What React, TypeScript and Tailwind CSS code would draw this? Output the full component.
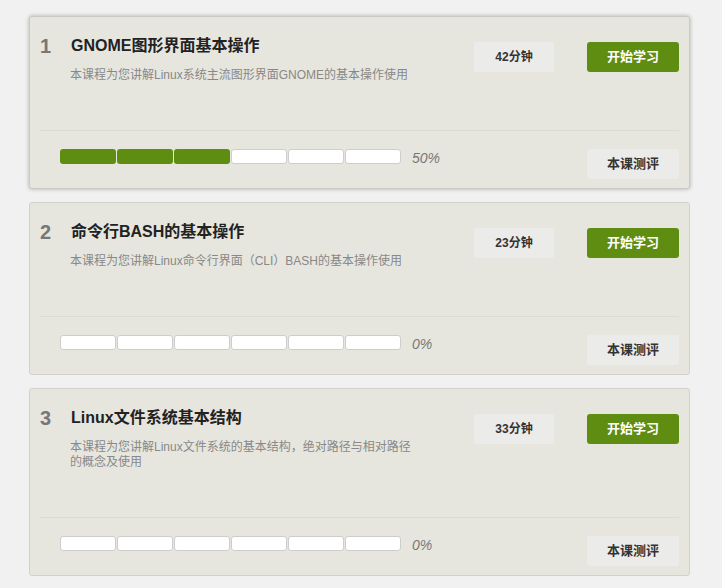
type Course = {
  id: number;
  title: string;
  desc: string;
  minutes: number;
  done: number;
  twoLines?: boolean;
  active?: boolean;
};

const courses: Course[] = [
  {
    id: 1,
    title: 'GNOME图形界面基本操作',
    desc: '本课程为您讲解Linux系统主流图形界面GNOME的基本操作使用',
    minutes: 42,
    done: 3,
    active: true,
  },
  {
    id: 2,
    title: '命令行BASH的基本操作',
    desc: '本课程为您讲解Linux命令行界面（CLI）BASH的基本操作使用',
    minutes: 23,
    done: 0,
  },
  {
    id: 3,
    title: 'Linux文件系统基本结构',
    desc: '本课程为您讲解Linux文件系统的基本结构，绝对路径与相对路径的概念及使用',
    minutes: 33,
    done: 0,
    twoLines: true,
  },
];

function ProgressBar({ done, total = 6 }: { done: number; total?: number }) {
  const percent = Math.round((done / total) * 100);
  return (
    <div className="ml-[20px] flex h-[15px] items-center">
      <div className="flex gap-px">
        {Array.from({ length: total }).map((_, i) =>
          i < done ? (
            <div key={i} className="h-[15px] w-[56px] rounded-[3px] bg-[#5f8d12]" />
          ) : (
            <div
              key={i}
              className="h-[15px] w-[56px] rounded-[3px] border border-[#cdcdcd] bg-white"
            />
          ),
        )}
      </div>
      <span className="mt-[4px] ml-[11px] text-[14px] italic text-[#777]">{percent}%</span>
    </div>
  );
}

function CourseCard({ course }: { course: Course }) {
  return (
    <div
      className={
        course.active
          ? 'rounded-[3px] border border-[#cbcac6] bg-[#e7e6de] shadow-[0_0_4px_rgba(0,0,0,0.28)]'
          : 'rounded-[3px] border border-[#d2d1cc] bg-[#e7e6de]'
      }
    >
      <div
        className={
          course.twoLines
            ? 'flex h-[128px] px-[10px] pt-[19px]'
            : 'flex h-[113px] px-[10px] pt-[19px]'
        }
      >
        <div className="w-[30px] text-[20px] font-bold leading-[20px] text-[#777]">
          {course.id}
        </div>
        <div className="flex-1">
          <h3 className="h-[20px] pl-[1px] text-[16px] font-bold leading-[20px] text-[#222]">
            {course.title}
          </h3>
          <p className="mt-[12px] w-[346px] text-[12px] leading-[15px] text-[#888]">
            {course.desc}
          </p>
        </div>
        <div className="mt-[6px] flex items-start">
          <div className="flex h-[30px] w-[80px] items-center justify-center rounded-[2px] bg-[#ebebea] text-[12px] font-bold text-[#333]">
            {course.minutes}分钟
          </div>
          <button
            type="button"
            className="ml-[33px] h-[30px] w-[92px] rounded-[3px] bg-[#5f8d12] text-[13px] font-bold text-white"
          >
            开始学习
          </button>
        </div>
      </div>
      <div className="px-[10px]">
        <div className="flex items-start justify-between border-t border-[#dcdad2] pt-[18px] pb-[9px]">
          <ProgressBar done={course.done} />
          <button
            type="button"
            className="h-[30px] w-[92px] rounded-[2px] bg-[#ebebea] text-[13px] font-bold text-[#333]"
          >
            本课测评
          </button>
        </div>
      </div>
    </div>
  );
}

export default function App() {
  return (
    <div
      className="min-h-[588px] w-[722px] bg-[#f1f1f1] pt-[16px] pl-[29px]"
      style={{ fontFamily: '"Liberation Sans", "Noto Sans CJK SC", sans-serif' }}
    >
      <div className="flex w-[661px] flex-col gap-[13px]">
        {courses.map((course) => (
          <CourseCard key={course.id} course={course} />
        ))}
      </div>
    </div>
  );
}
